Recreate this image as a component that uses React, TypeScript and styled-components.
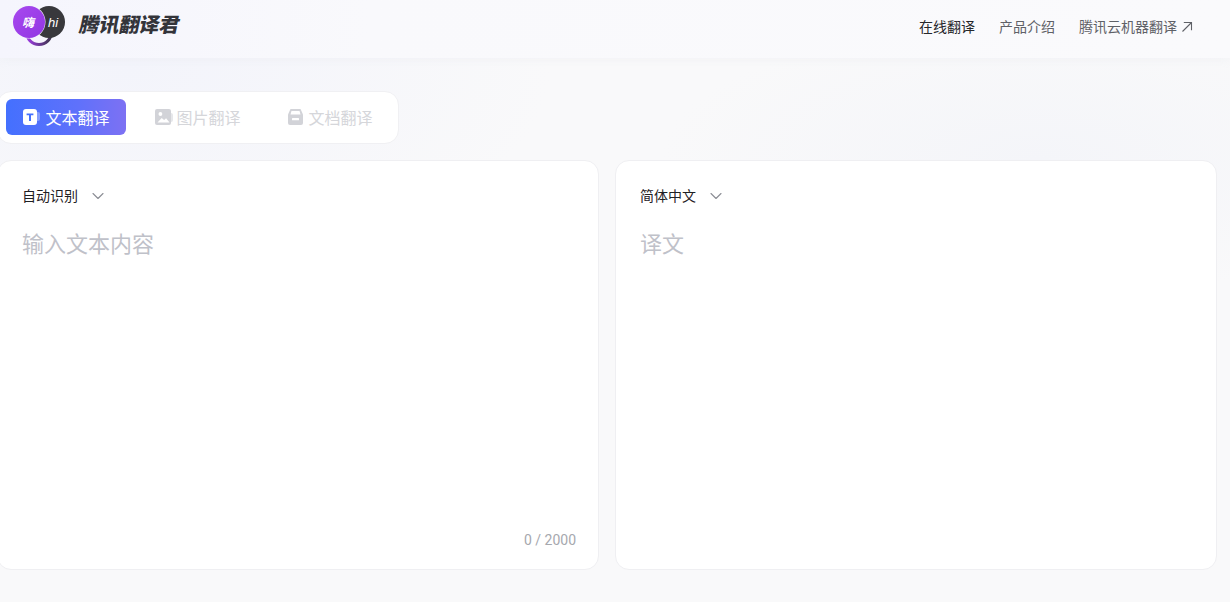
import React from "react";
import styled, { createGlobalStyle } from "styled-components";
import { ChevronDown } from "lucide-react";

const CJK = `"Noto Sans CJK SC", "Noto Sans", sans-serif`;

const GlobalStyle = createGlobalStyle`
  html, body {
    margin: 0;
    padding: 0;
    height: 100%;
    overflow: hidden;
    background: #f9f9fa;
    font-family: ${CJK};
  }
`;

const Page = styled.div`
  width: 1230px;
  height: 602px;
  overflow: hidden;
  background:
    radial-gradient(ellipse 420px 210px at 130px 70px, #f3f4fb 0%, rgba(243, 244, 251, 0) 100%),
    radial-gradient(ellipse 380px 140px at 1040px 160px, #f4f5f9 0%, rgba(244, 245, 249, 0) 100%),
    #f9f9fa;
`;

const Header = styled.header`
  height: 58px;
  display: flex;
  align-items: center;
  justify-content: space-between;
  padding: 0 37px 4px 13px;
  box-sizing: border-box;
  background: linear-gradient(90deg, #f5f5fd 0%, #f9f9fc 30%, #fafafc 100%);
  box-shadow: 0 2px 8px rgba(230, 232, 240, 0.3);
`;

const Brand = styled.div`
  display: flex;
  align-items: center;
  gap: 14px;
  margin-top: -8px;
`;

const BrandName = styled.span`
  margin-top: 2px;
  font-size: 20px;
  line-height: 28px;
  font-weight: 900;
  color: #33343a;
  transform: skewX(-12deg);
`;

const Nav = styled.nav`
  display: flex;
  align-items: center;
  gap: 24px;
  margin-top: -2px;
`;

const NavItem = styled.a<{ $active?: boolean }>`
  display: flex;
  align-items: center;
  gap: 4px;
  font-size: 14px;
  line-height: 20px;
  color: ${(p) => (p.$active ? "#26272b" : "#5f6167")};

  svg {
    margin-top: 1px;
  }
`;

const Main = styled.main`
  margin-left: -3px;
  padding-top: 33px;
  width: 1220px;
`;

const Tabs = styled.div`
  width: 402px;
  height: 53px;
  box-sizing: border-box;
  display: flex;
  align-items: center;
  gap: 12px;
  padding: 0 8px 1px;
  background: #fff;
  border: 1px solid #f0f0f3;
  border-radius: 14px;
`;

const Tab = styled.div<{ $active?: boolean }>`
  flex: 0 0 120px;
  height: 36px;
  display: flex;
  align-items: center;
  justify-content: center;
  gap: ${(p) => (p.$active ? "4px" : "2px")};
  border-radius: 6px;
  font-size: 16px;
  color: ${(p) => (p.$active ? "#fff" : "#d5d6da")};
  background: ${(p) =>
    p.$active ? "linear-gradient(90deg, #4470fe 0%, #5f71fb 60%, #7d71f3 100%)" : "transparent"};
`;

const Panels = styled.div`
  margin-top: 16px;
  display: grid;
  grid-template-columns: 602px 602px;
  gap: 16px;
`;

const Panel = styled.section`
  height: 410px;
  box-sizing: border-box;
  background: #fff;
  border: 1px solid #efeff2;
  border-radius: 14px;
  padding: 23px 22px 19px 24px;
  display: flex;
  flex-direction: column;
`;

const LangSelect = styled.div`
  display: flex;
  align-items: center;
  gap: 10px;
  height: 22px;
  font-size: 14px;
  color: #1f2024;

  svg {
    margin-top: 1px;
  }
`;

const Placeholder = styled.div`
  margin-top: 20px;
  font-size: 22px;
  line-height: 32px;
  color: #bfc1c9;
  flex: 1;
`;

const Counter = styled.div`
  align-self: flex-end;
  font-family: Roboto, "Noto Sans", sans-serif;
  font-size: 14px;
  line-height: 20px;
  color: #a6a8ae;
`;

const Logo = () => (
  <svg width="53" height="48" viewBox="0 0 53 48" aria-hidden="true">
    <defs>
      <linearGradient id="ring" x1="0" y1="0" x2="1" y2="0">
        <stop offset="0" stopColor="#a03be8" />
        <stop offset="1" stopColor="#3a3548" />
      </linearGradient>
      <linearGradient id="bubble" x1="0" y1="0" x2="1" y2="1">
        <stop offset="0" stopColor="#a848ef" />
        <stop offset="1" stopColor="#9136e2" />
      </linearGradient>
    </defs>
    <circle cx="26" cy="33" r="12.5" fill="none" stroke="url(#ring)" strokeWidth="3" />
    <circle cx="36" cy="23" r="16" fill="#38383c" />
    <circle cx="16" cy="23" r="16.5" fill="#f3f3fb" />
    <circle cx="16" cy="23" r="16" fill="url(#bubble)" />
    <text x="15" y="27.5" textAnchor="middle" fontSize="12" fontWeight="700" fontStyle="italic" fill="#fff" fontFamily={CJK}>
      嗨
    </text>
    <text x="40" y="28" textAnchor="middle" fontSize="13" fontStyle="italic" fill="#fff" fontFamily="Liberation Sans, sans-serif">
      hi
    </text>
  </svg>
);

const OutArrow = () => (
  <svg width="12" height="12" viewBox="0 0 12 12" fill="none" stroke="#5f6167" strokeWidth="1.1" aria-hidden="true">
    <path d="M1.5 10.5L10.5 1.5M2.8 1.5h7.7v7.7" />
  </svg>
);

const TextIcon = () => (
  <svg width="19" height="20" viewBox="0 0 19 20" aria-hidden="true">
    <rect x="12" y="5" width="6" height="9" rx="2" fill="#fff" opacity="0.3" />
    <rect x="1" y="2" width="14" height="16" rx="3" fill="#fff" />
    <path d="M4.6 6.4h6.8v1.9H9v5.7H7V8.3H4.6z" fill="#4470fe" />
  </svg>
);

const ImageIcon = () => (
  <svg width="19" height="20" viewBox="0 0 19 20" aria-hidden="true">
    <rect x="14" y="6" width="4" height="9" rx="2" fill="#e6e7ea" />
    <rect x="0" y="2" width="16" height="16" rx="2" fill="#d2d3d8" />
    <circle cx="5.4" cy="7" r="1.9" fill="#fff" />
    <path d="M2.5 15.5l4.2-4.6 2.4 2.2 2-1.8 3.4 4.2z" fill="#fff" />
  </svg>
);

const DocIcon = () => (
  <svg width="19" height="20" viewBox="0 0 19 20" aria-hidden="true">
    <path d="M3.5 2h10l2.5 5.5V16a2 2 0 0 1-2 2H3a2 2 0 0 1-2-2V7.5z" fill="#d2d3d8" />
    <path d="M4.5 4h8l1 3.5h-10z" fill="#fff" />
    <rect x="5" y="11" width="7" height="2.2" rx="0.5" fill="#fff" />
  </svg>
);

export default function App() {
  return (
    <Page>
      <GlobalStyle />
      <Header>
        <Brand>
          <Logo />
          <BrandName>腾讯翻译君</BrandName>
        </Brand>
        <Nav>
          <NavItem $active>在线翻译</NavItem>
          <NavItem>产品介绍</NavItem>
          <NavItem>
            腾讯云机器翻译
            <OutArrow />
          </NavItem>
        </Nav>
      </Header>
      <Main>
        <Tabs>
          <Tab $active>
            <TextIcon />
            文本翻译
          </Tab>
          <Tab>
            <ImageIcon />
            图片翻译
          </Tab>
          <Tab>
            <DocIcon />
            文档翻译
          </Tab>
        </Tabs>
        <Panels>
          <Panel>
            <LangSelect>
              自动识别
              <ChevronDown size={20} color="#8b8d94" strokeWidth={1.3} />
            </LangSelect>
            <Placeholder>输入文本内容</Placeholder>
            <Counter>0 / 2000</Counter>
          </Panel>
          <Panel>
            <LangSelect>
              简体中文
              <ChevronDown size={20} color="#8b8d94" strokeWidth={1.3} />
            </LangSelect>
            <Placeholder>译文</Placeholder>
          </Panel>
        </Panels>
      </Main>
    </Page>
  );
}
